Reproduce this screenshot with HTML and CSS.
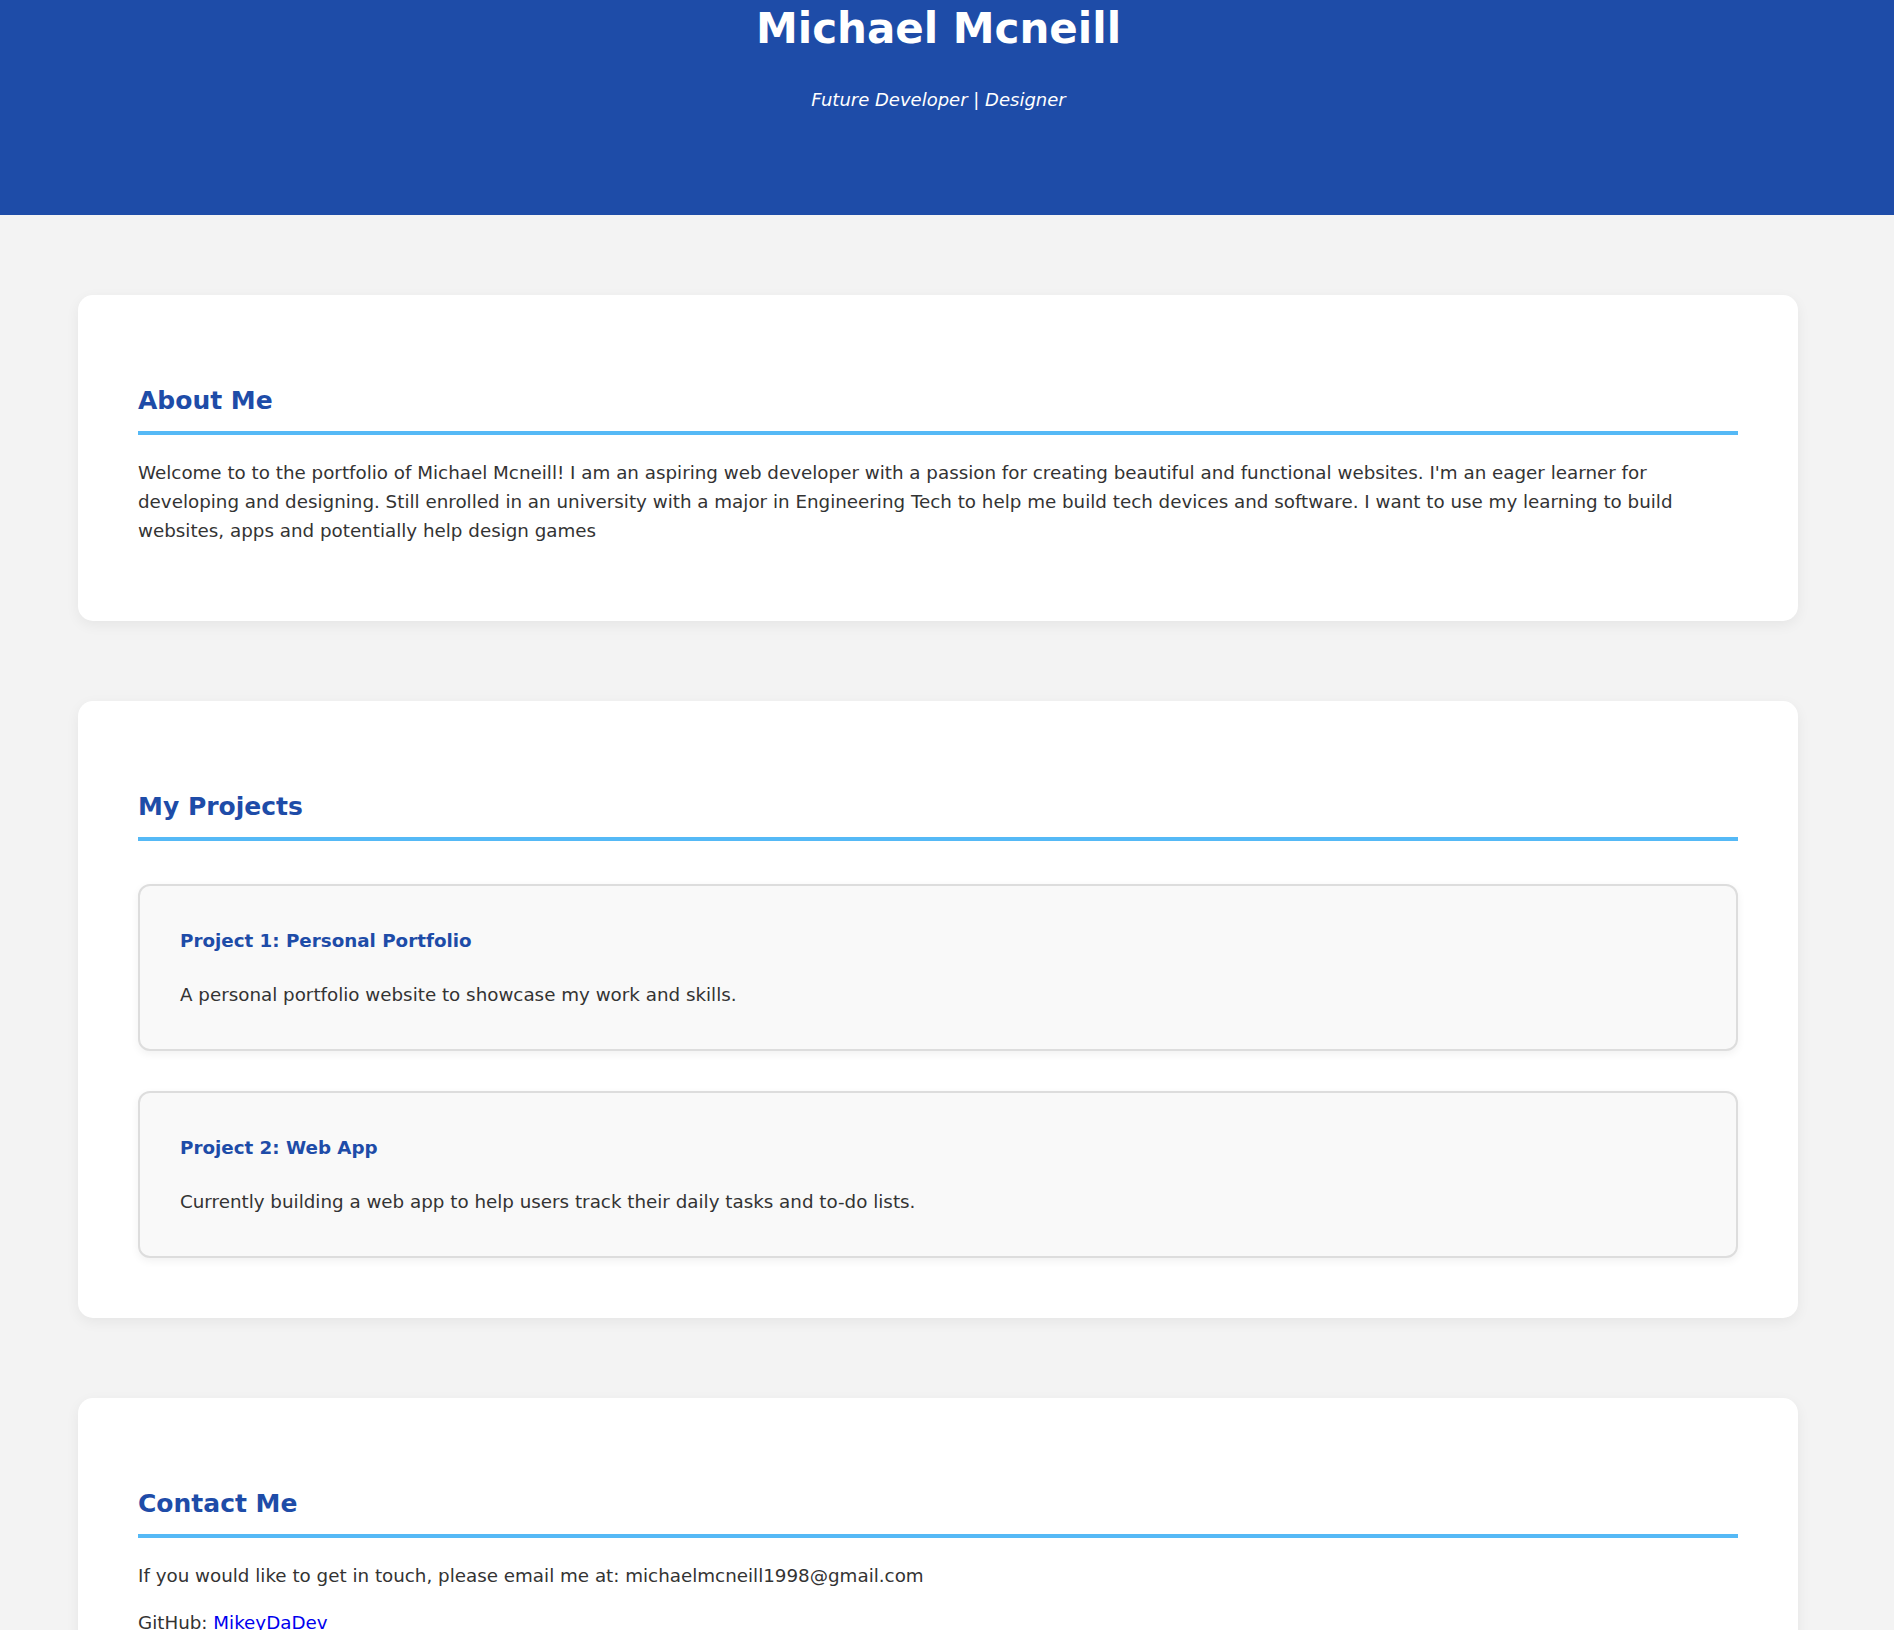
FILE: index.html
```html
<!DOCTYPE html>
<html lang="en">
<head>
<meta charset="utf-8">
<title>Michael Mcneill - Portfolio</title>
<link rel="stylesheet" href="styles.css">
</head>
<body>
<header class="site-header">
  <h1 class="site-title">Michael Mcneill</h1>
  <p class="tagline">Future Developer | Designer</p>
</header>
<main class="content">
  <section class="card">
    <h2 class="card-title">About Me</h2>
    <p class="text">Welcome to to the portfolio of Michael Mcneill! I am an aspiring web developer with a passion for creating beautiful and functional websites. I'm an eager learner for developing and designing. Still enrolled in an university with a major in Engineering Tech to help me build tech devices and software. I want to use my learning to build websites, apps and potentially help design games</p>
  </section>
  <section class="card">
    <h2 class="card-title">My Projects</h2>
    <div class="projects">
      <article class="project">
        <h3 class="project-title">Project 1: Personal Portfolio</h3>
        <p class="project-text">A personal portfolio website to showcase my work and skills.</p>
      </article>
      <article class="project">
        <h3 class="project-title">Project 2: Web App</h3>
        <p class="project-text">Currently building a web app to help users track their daily tasks and to-do lists.</p>
      </article>
    </div>
  </section>
  <section class="card">
    <h2 class="card-title">Contact Me</h2>
    <p class="text">If you would like to get in touch, please email me at: michaelmcneill1998@gmail.com</p>
    <p class="text">GitHub: <a class="link" href="#">MikeyDaDev</a></p>
  </section>
</main>
</body>
</html>
```
FILE: styles.css
```css
html, body {
  margin: 0;
  padding: 0;
}
body {
  background: #f3f3f3;
  color: #333333;
  font-family: "DejaVu Sans", "Open Sans", sans-serif;
  font-size: 18.3px;
}
.site-header {
  background: #1e4ca8;
  color: #ffffff;
  height: 215px;
  box-sizing: border-box;
  padding: 0 17px 0 0;
  text-align: center;
}
.site-title {
  margin: 0;
  font-size: 42px;
  line-height: 58px;
  font-weight: bold;
}
.tagline {
  margin: 27px 0 0;
  font-size: 18px;
  line-height: 30px;
  font-style: italic;
}
.content {
  display: flex;
  flex-direction: column;
  gap: 80px;
  padding: 80px 96px 80px 78px;
}
.card {
  background: #ffffff;
  border-radius: 15px;
  box-shadow: 0 4px 14px rgba(0, 0, 0, 0.06);
  padding: 60px;
}
.card-title {
  margin: 24px 0 24px;
  padding-bottom: 9px;
  border-bottom: 4px solid #55b9f6;
  color: #1e4ca8;
  font-size: 25px;
  line-height: 43px;
  font-weight: bold;
}
.text {
  margin: 16px 0;
  line-height: 28.8px;
  font-size: 18.3px;
}
.card-title + .text {
  margin-top: 0;
}
.text + .text {
  margin-top: 18px;
}
.link {
  color: #0000ee;
  text-decoration: none;
}
.projects {
  display: flex;
  flex-direction: column;
  gap: 40px;
  margin-top: 43px;
}
.project {
  background: #f9f9f9;
  border: 2px solid #dddddd;
  border-radius: 12px;
  box-shadow: 0 3px 8px rgba(0, 0, 0, 0.06);
  padding: 23px 40px 23px;
}
.project-title {
  margin: 16px 0 0;
  color: #1e4ca8;
  font-size: 18.3px;
  line-height: 32px;
  font-weight: bold;
}
.project-text {
  margin: 24px 0 16px;
  font-size: 18.3px;
  line-height: 28.8px;
}
```
